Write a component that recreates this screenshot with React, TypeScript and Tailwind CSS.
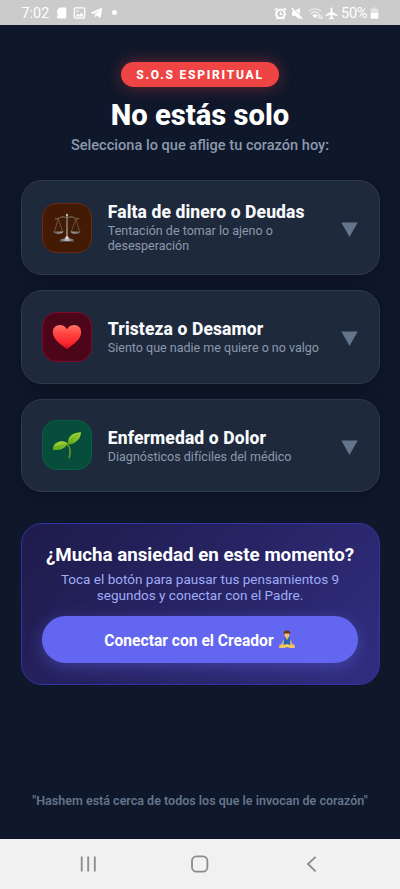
import type { ReactNode } from 'react';

function StatusBar() {
  return (
    <header className="flex h-[25px] shrink-0 items-center justify-between bg-[#cbcbcb] pt-px pr-[21px] pl-[21.500px] text-white">
      <div className="flex items-center">
        <span className="w-[29px] pt-px text-[14.400px] leading-[20px]">7:02</span>
        <svg className="ml-[5.500px] h-[12px] w-[11px]" viewBox="0 0 11 12" fill="currentColor">
          <path d="M3.6.5h5.7a1 1 0 0 1 1 1v9a1 1 0 0 1-1 1H2a1 1 0 0 1-1-1V9l.7-.5V7L1 6.500V3z" />
        </svg>
        <svg className="ml-[5.500px] h-[12px] w-[13px]" viewBox="0 0 13 12">
          <rect x="1.300" y=".9" width="10.400" height="10.200" rx="1" fill="none" stroke="currentColor" strokeWidth="1.300" />
          <path d="m2.500 9.500 2.300-3 1.700 1.700 2.200-3 2 4.300z" fill="currentColor" />
          <circle cx="4.400" cy="4" r="1" fill="currentColor" />
        </svg>
        <svg className="ml-[4px] h-[12px] w-[13px]" viewBox="0 0 13 12" fill="currentColor">
          <path d="M.4 5.700 12.400.6 10.500 11 6.700 8.600 4.900 10.600 4.700 7.600 9.700 3.100 3.600 7z" />
        </svg>
        <span className="ml-[9px] size-[5px] -translate-y-px rounded-full bg-white" />
      </div>
      <div className="flex items-center">
        <svg className="h-[13px] w-[13px]" viewBox="0 0 13 13" fill="none" stroke="currentColor">
          <circle cx="6.500" cy="6.800" r="4.300" strokeWidth="2.200" />
          <path d="M6.500 4.500v3h2" strokeWidth="1.200" />
          <path d="m.8 3 2.500-2M12.200 3 9.700 1M2.500 12.300l1.300-1.500m6.700 1.500-1.300-1.500" strokeWidth="1.600" />
        </svg>
        <svg className="ml-[4px] h-[13px] w-[12px]" viewBox="0 0 12 13" fill="currentColor">
          <path d="M1 4.300h2.700L8.800.7v11.600L4 8.800H1z" />
          <path d="M1 .4 11.800 11.200" stroke="#cbcbcb" strokeWidth="1.300" />
          <path d="M.7 1 11.500 11.900" stroke="currentColor" strokeWidth="1.400" />
        </svg>
        <svg className="ml-[5px] h-[13px] w-[15px]" viewBox="0 0 15 13" fill="none" stroke="currentColor" strokeWidth="1.300">
          <path d="M.8 4.300Q7-.5 13.200 4.300" opacity=".6" />
          <path d="M2.700 6.500Q7 3.300 11.300 6.500" opacity=".8" />
          <path d="m4.700 8.200 2.300 2.700 2.200-2.700Q7 6.600 4.700 8.200z" fill="currentColor" strokeWidth=".5" />
          <path d="M11 11.500V7.500m-1.200 1.300L11 7.500m2.200.5v4m1.200-1.200-1.200 1.200" strokeWidth="1" />
        </svg>
        <svg className="ml-[2px] h-[13px] w-[13px]" viewBox="0 0 13 13" fill="currentColor">
          <path d="M6.500.6c.7 0 1 .7 1 1.400v3l5 3v1.300l-5-1.500v2.700l1.400 1v1l-2.400-.7-2.400.7v-1l1.400-1V7.800l-5 1.500V8l5-3V2c0-.7.3-1.400 1-1.400z" />
        </svg>
        <span className="ml-[3.500px] w-[27.500px] text-[14.600px] leading-[20px] tracking-[-0.300px]">50%</span>
        <svg className="ml-[1.500px] h-[13px] w-[9px]" viewBox="0 0 9 13" fill="currentColor">
          <path d="M3 .5h3v1.300h1.600q.8 0 .8.8V6H.6V2.600q0-.8.8-.8H3z" opacity=".45" />
          <path d="M.6 6h7.800v4.900q0 .8-.8.8H1.400q-.8 0-.8-.8z" />
        </svg>
      </div>
    </header>
  );
}

function Scales() {
  return (
    <svg className="size-[32px]" viewBox="0 0 32 32" fill="none">
      <defs>
        <linearGradient id="metal" x1="0" x2="1">
          <stop stopColor="#55504d" />
          <stop offset=".5" stopColor="#c8c8c8" />
          <stop offset="1" stopColor="#55504d" />
        </linearGradient>
      </defs>
      <path d="M7.200 7 3.300 20M7.200 7l4.600 13M24.800 7l-4.600 13M24.800 7l3.900 13" stroke="#80746c" strokeWidth=".6" />
      <path d="M4 6.500c2.600 1.600 4.500-1.700 8-1.600 2.100 0 2.700.7 4 .7s1.900-.7 4-.7c3.500-.1 5.400 3.200 8 1.600" stroke="#8a827e" strokeWidth=".9" />
      <path d="M15.400 3h1.200l.3 23h-1.800z" fill="#8c8785" />
      <circle cx="16" cy="3" r="1.200" fill="#bbb" />
      <path d="M2 19.600h10.500c-.7 3.200-9.800 3.200-10.500 0zM19.500 19.600H30c-.7 3.200-9.800 3.200-10.500 0z" fill="url(#metal)" />
      <path d="M14.800 24.500h2.400l1.200 2.500h-4.800z" fill="#ddd" />
      <path d="M9 28.300q0-1.500 5-1.800h4q5 .3 5 1.800v1.200H9z" fill="url(#metal)" />
      <path d="M9 29.500h14" stroke="#4a4541" strokeWidth=".8" />
    </svg>
  );
}

function Heart() {
  return (
    <svg className="size-[32px]" viewBox="0 0 32 32">
      <defs>
        <linearGradient id="heart" x2="0" y2="1">
          <stop stopColor="#ff7468" />
          <stop offset=".35" stopColor="#ff463f" />
          <stop offset=".75" stopColor="#fb2730" />
          <stop offset="1" stopColor="#d80b20" />
        </linearGradient>
      </defs>
      <path d="M16 28C11.500 24.500 1.800 19 1.800 11.200c0-4.200 3-7.200 7-7.200 3 0 5.700 1.400 7.200 4.300C17.500 5.400 20.200 4 23.200 4c4 0 7 3 7 7.200C30.200 19 20.500 24.500 16 28z" fill="url(#heart)" />
    </svg>
  );
}

function Sprout() {
  return (
    <svg className="size-[32px]" viewBox="0 0 32 32">
      <defs>
        <linearGradient id="leaf" x2="0" y2="1">
          <stop stopColor="#a4d83a" />
          <stop offset="1" stopColor="#62aa1a" />
        </linearGradient>
      </defs>
      <path d="M15.500 15c3 2 4.600 7 2.700 13.500" fill="none" stroke="#6b9a2a" strokeWidth="1.500" strokeLinecap="round" />
      <path d="M17.400 15.500c-2-9 6.300-12.200 12.700-12.300-.8 7.800-6 11.700-12.700 12.300z" fill="url(#leaf)" />
      <path d="M1.700 20.400C2.200 14.100 9 9.500 17 14.300 13.200 20.500 8.500 21.800 1.700 20.400z" fill="url(#leaf)" />
      <path d="M17.500 15.300C20 10.500 23.500 7.300 28 5.200M3.700 18.500C8 17.800 12 16.800 17 14.500" fill="none" stroke="#59931d" strokeWidth=".6" />
    </svg>
  );
}

function Meditator() {
  return (
    <svg className="h-[19px] w-[18px] shrink-0" viewBox="0 0 18 19">
      <path d="M6 8.500 3.600 14l-2.500 1.100.4.900 3.500-.9L7 11zM12 8.500l2.400 5.500 2.500 1.100-.4.900-3.500-.9L11 11z" fill="#efb66c" />
      <path d="M5.700 7.900q3.300-1.200 6.600 0L12.100 15H5.900z" fill="#2466b5" />
      <path d="M7.700 7h2.600v1.600L9 10 7.700 8.600z" fill="#e5a85d" />
      <path d="M1 17c0-1.700 3.500-1.800 8-3 4.500 1.200 8 1.300 8 3 0 1.900-5.300 1.200-8 0-2.700 1.200-8 1.900-8 0z" fill="#f3cc55" />
      <ellipse cx="9" cy="4.600" rx="2.600" ry="3" fill="#f2bf79" />
      <path d="M6.200 4.800C5 1.900 6.700.5 9.200.6c2.600 0 3.900 1.800 2.600 4.200l-.6-1.600C9.700 3.700 8.200 3.300 7 3.200z" fill="#693515" />
    </svg>
  );
}

interface CardProps {
  title: string;
  lines: string[];
  icon: ReactNode;
  size: string;
  tile: string;
}

function TopicCard({ title, lines, icon, size, tile }: CardProps) {
  return (
    <button className={`flex w-full items-center rounded-[21px] border border-[#2d3a4c] bg-[#1e293b] pr-[21px] pl-[20px] text-left shadow-[0_4px_16px_rgba(0,0,0,0.25)] ${size}`}>
      <span className={`flex size-[50px] shrink-0 items-center justify-center rounded-[14.500px] border ${tile}`}>{icon}</span>
      <span className="ml-[16.300px] flex flex-1 flex-col pb-px whitespace-nowrap">
        <span className="text-[17.500px] leading-[22px] font-extrabold tracking-[0.110px] text-[#f8fafc]">{title}</span>
        {lines.map((line) => (
          <span key={line} className="text-[12.520px] leading-[15px] text-[#8b99ad]">{line}</span>
        ))}
      </span>
      <svg className="mt-[3px] h-[15px] w-[17px] shrink-0" viewBox="0 0 17 15" fill="#64748b">
        <path d="M.3.500h16.400L8.500 15z" />
      </svg>
    </button>
  );
}

export default function App() {
  return (
    <div className="flex h-[889px] w-[400px] flex-col overflow-hidden bg-[#0f172a] font-['Roboto',sans-serif]">
      <StatusBar />
      <main className="flex flex-1 flex-col items-center px-[21px] pt-[37px]">
        <div className="flex h-[25px] w-[158px] items-center justify-center rounded-full bg-[#ef4444] text-[12px] leading-[16px] font-extrabold tracking-[1.760px] whitespace-nowrap text-white shadow-[0_0_16px_rgba(239,68,68,0.4)]">
          S.O.S ESPIRITUAL
        </div>
        <h1 className="mt-[10px] text-[29.200px] leading-[36px] font-extrabold whitespace-nowrap text-white">No estás solo</h1>
        <p className="mt-[2px] text-[14.600px] leading-[20px] font-medium whitespace-nowrap text-[#8b99ad]">Selecciona lo que aflige tu corazón hoy:</p>

        <section className="mt-[25px] flex w-[359px] flex-col gap-[15px]">
          <TopicCard title="Falta de dinero o Deudas" lines={['Tentación de tomar lo ajeno o', 'desesperación']} icon={<Scales />} size="h-[95px]" tile="border-[#6b2a12] bg-[#431b04]" />
          <TopicCard title="Tristeza o Desamor" lines={['Siento que nadie me quiere o no valgo']} icon={<Heart />} size="h-[94px]" tile="border-[#7d0c32] bg-[#4c0519]" />
          <TopicCard title="Enfermedad o Dolor" lines={['Diagnósticos difíciles del médico']} icon={<Sprout />} size="h-[93px]" tile="mb-px border-[#065f46] bg-[#064e3b]" />
        </section>

        <section className="mt-[31px] flex h-[162px] w-[359px] flex-col items-center rounded-[21px] border border-[#3730a3] bg-linear-135 from-[#1e1b4b] to-[#312e81] px-[20px] pt-[19px] whitespace-nowrap">
          <h2 className="text-[18.750px] leading-[24px] font-bold text-white">¿Mucha ansiedad en este momento?</h2>
          <p className="mt-[4px] text-center text-[13.540px] leading-[16px] text-[#a0acf6]">
            Toca el botón para pausar tus pensamientos 9<br />segundos y conectar con el Padre.
          </p>
          <button className="mt-[13px] flex h-[47px] w-[316px] shrink-0 items-center justify-center gap-[4px] rounded-full bg-[#6366f1] text-[15.600px] font-bold text-white shadow-[0_4px_16px_rgba(99,102,241,0.4)]">
            <span className="pt-[2px] leading-[20px]">Conectar con el Creador</span> <Meditator />
          </button>
        </section>
        <p className="mt-[107px] text-[12.520px] leading-[18px] font-semibold whitespace-nowrap text-[#64748b]">"Hashem está cerca de todos los que le invocan de corazón"</p>
      </main>

      <nav className="flex h-[50px] shrink-0 items-center bg-[#f1f1f1] pl-[80px] text-[#8b8b8b]">
        <svg className="h-[18px] w-[17px]" viewBox="0 0 17 18" stroke="currentColor" strokeWidth="1.800">
          <path d="M1.700 1.500v15M8.200 1.500v15M14.800 1.500v15" />
        </svg>
        <svg className="ml-[94px] h-[18px] w-[18px]" viewBox="0 0 18 18" fill="none" stroke="currentColor" strokeWidth="1.800">
          <rect x="1" y="1.300" width="15.400" height="15.400" rx="4.500" />
        </svg>
        <svg className="ml-[97px] h-[18px] w-[12px]" viewBox="0 0 12 18" fill="none" stroke="currentColor" strokeWidth="1.800">
          <path d="M9.600 1.800 2 9l7.600 7.300" />
        </svg>
      </nav>
    </div>
  );
}
